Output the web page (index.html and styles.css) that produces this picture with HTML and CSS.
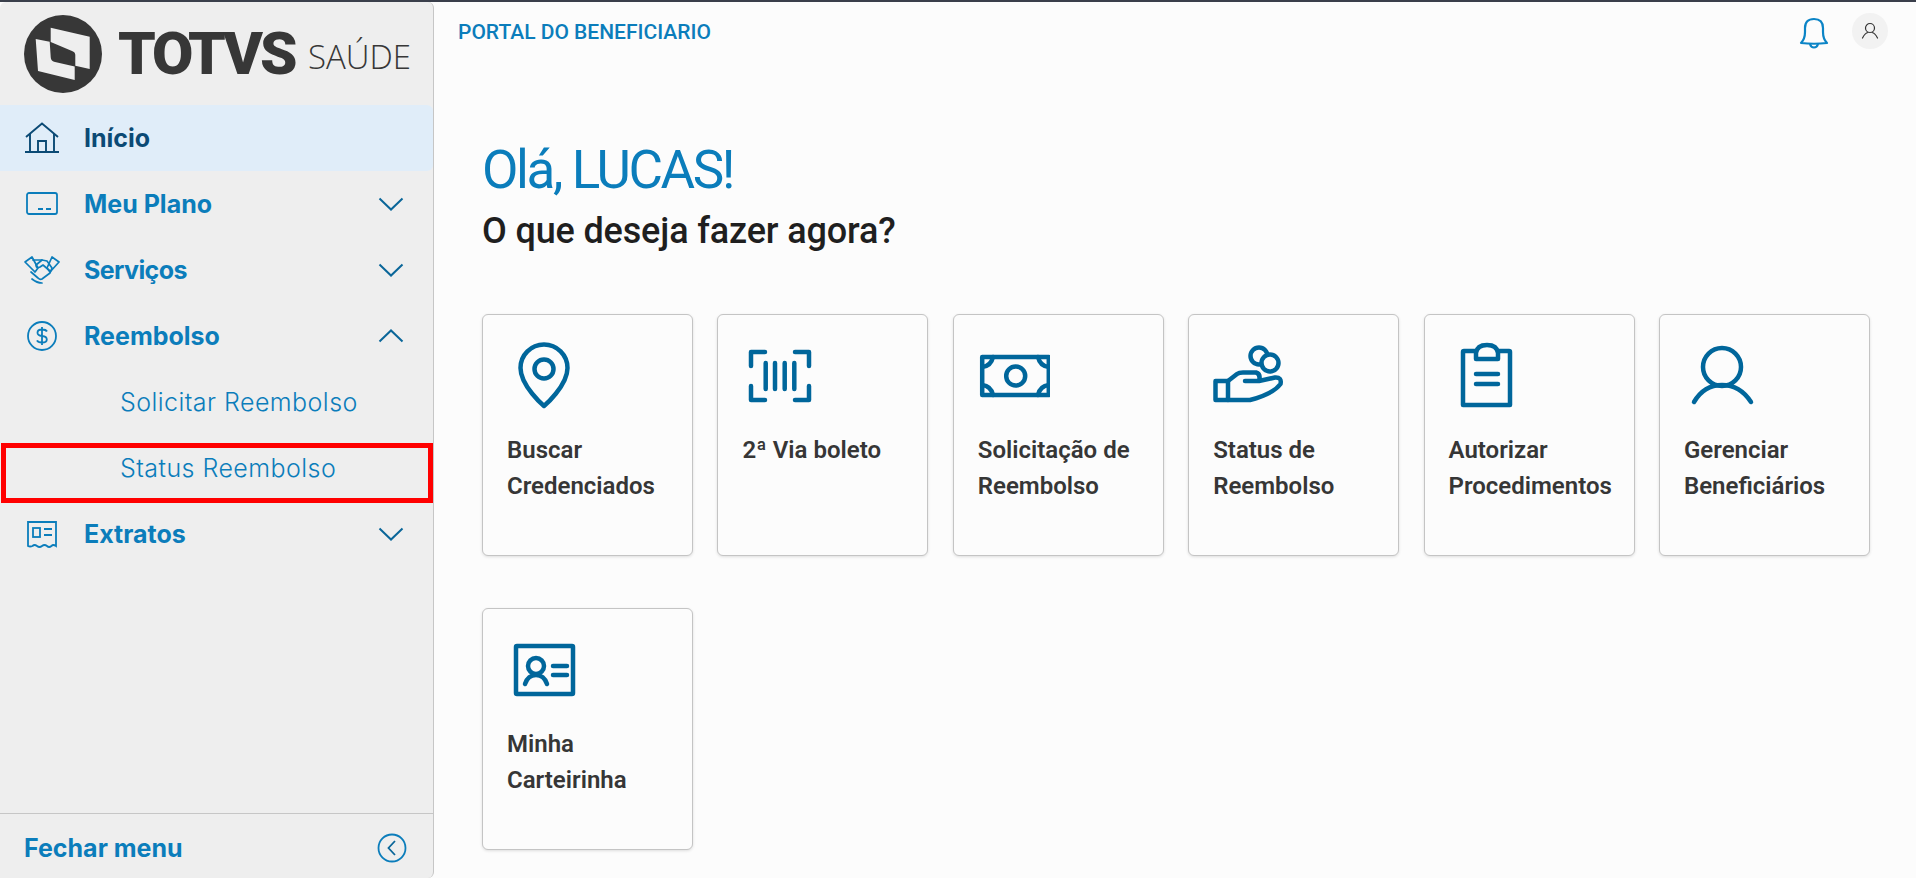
FILE: index.html
```html
<!DOCTYPE html>
<html lang="pt-BR">
  <head>
    <meta charset="UTF-8" />
    <title>Portal do Beneficiario</title>
    <link rel="stylesheet" href="styles.css">
  </head>
  <body>
    <aside class="sidebar">
      <div class="logo">
        <svg class="logo-mark" width="80" height="80" viewBox="0 0 80 80">
          <circle cx="40" cy="40" r="39" fill="#373737"/>
          <path d="M27.700 13.700 L66.700 22.700 L66.700 55 L52.300 51.700 L52.300 41 Q52.300 38 49 37 L27.700 28 Z" fill="#eee"/>
          <path d="M12.700 25 L26.700 27.700 L27.700 43 Q27.700 46.500 31 47.700 L51.700 52.500 L51.700 66 L15 57 Z" fill="#eee"/>
        </svg>
        <span class="logo-name">TOTVS</span>
        <span class="logo-sub">SAÚDE</span>
      </div>

      <nav class="menu">
        <a class="menu-item active">
          <svg class="menu-icon" width="36" height="32" viewBox="0 0 36 32" fill="none" stroke="currentColor" stroke-width="1.900">
            <path d="M2 15 L18 1.500 L34 15"/>
            <path d="M6 12 V29 M30 12 V29 M1 30 H35"/>
            <path d="M14 29 V19 H22 V29"/>
          </svg>
          <span>Início</span>
        </a>
        <a class="menu-item">
          <svg class="menu-icon" width="36" height="26" viewBox="0 0 36 26" fill="none" stroke="currentColor" stroke-width="1.800">
            <rect x="3" y="2" width="30" height="21" rx="2"/>
            <path d="M14 18 H19 M22 18 H27"/>
          </svg>
          <span>Meu Plano</span>
          <svg class="chevron" width="26" height="14" viewBox="0 0 26 14"><path d="M1.500 1.500 L13 12.500 L24.500 1.500"/></svg>
        </a>
        <a class="menu-item">
          <svg class="menu-icon" width="36" height="28" viewBox="0 0 36 28" fill="none" stroke="currentColor" stroke-width="1.700" stroke-linejoin="round" stroke-linecap="round">
            <path d="M1 6 L8 1 L14 12 L11 16 Z M35 6 L28 1 L23 12 L26 16 Z"/>
            <path d="M9 4 H14 L18 4 L23 5 L28 12 L26 17 L18 23 Q16 24 14 22 L7 16"/>
            <path d="M18 4 L12 9 Q12 13 16 11 L19 9 L26 15"/>
            <path d="M8 23 Q13 27 18 27"/>
          </svg>
          <span class="tight">Serviços</span>
          <svg class="chevron" width="26" height="14" viewBox="0 0 26 14"><path d="M1.500 1.500 L13 12.500 L24.500 1.500"/></svg>
        </a>
        <a class="menu-item">
          <svg class="menu-icon" width="36" height="32" viewBox="0 0 36 32" fill="none" stroke="currentColor" stroke-width="1.800">
            <circle cx="18" cy="16" r="14"/>
            <path d="M23 11.500 Q22 9.500 18 9.500 Q13.500 9.500 13.500 12.700 Q13.500 15.500 18 16 Q22.800 16.500 22.800 19.400 Q22.800 22.500 18 22.500 Q14 22.500 13 20.300 M18 7 V25"/>
          </svg>
          <span>Reembolso</span>
          <svg class="chevron" width="26" height="14" viewBox="0 0 26 14"><path d="M1.500 12.500 L13 1.500 L24.500 12.500"/></svg>
        </a>
        <a class="menu-sub">Solicitar Reembolso</a>
        <a class="menu-sub">Status Reembolso</a>
        <a class="menu-item">
          <svg class="menu-icon" width="36" height="28" viewBox="0 0 36 28" fill="none" stroke="currentColor" stroke-width="1.800">
            <path d="M4 26 V2 H32 V26 Q29 24 27.500 26 Q25 28 23 26 Q20.500 24 18 26 Q15.500 28 13 26 Q10.500 24 8.500 26 Q6 27 4 26 Z"/>
            <rect x="9" y="8" width="7" height="9"/>
            <path d="M20 9 H28 M20 15 H28"/>
          </svg>
          <span>Extratos</span>
          <svg class="chevron" width="26" height="14" viewBox="0 0 26 14"><path d="M1.500 1.500 L13 12.500 L24.500 1.500"/></svg>
        </a>
      </nav>

      <div class="sidebar-footer">
        <span>Fechar menu</span>
        <svg width="30" height="30" viewBox="0 0 30 30" fill="none" stroke="#0b7dbb" stroke-width="1.800">
          <circle cx="15" cy="15" r="13.500"/>
          <path d="M18 8 L11.500 15 L18 22" stroke="#0a6699"/>
        </svg>
      </div>

      <div class="highlight"></div>
    </aside>

    <main class="content">
      <header class="topbar">
        <span class="portal-title">PORTAL DO BENEFICIARIO</span>
        <svg class="bell" width="30" height="32" viewBox="0 0 30 32" fill="none" stroke="#0b84c6" stroke-width="2.200" stroke-linejoin="round">
          <path d="M2 26 Q6 22 6 15 V11 Q6 2 15 2 Q24 2 24 11 V15 Q24 22 28 26 Q15 27.500 2 26 Z"/>
          <path d="M11 27 Q12 30.500 15 30.500 Q18 30.500 19 27"/>
        </svg>
        <div class="avatar">
          <svg width="18" height="18" viewBox="0 0 18 18" fill="none" stroke="#333" stroke-width="1.200" stroke-linecap="round">
            <circle cx="9" cy="6" r="4.500"/>
            <path d="M1.500 16 Q4 11 7 10.500 M16.500 16 Q14 11 11 10.500"/>
          </svg>
        </div>
      </header>

      <section class="welcome">
        <h1>Olá, LUCAS!</h1>
        <h2>O que deseja fazer agora?</h2>
      </section>

      <section class="cards">
        <div class="card">
          <svg class="card-icon" viewBox="0 0 72 72">
            <path d="M37 66 C37 66 13.500 46 13.500 28 A23.500 23.500 0 0 1 60.500 28 C60.500 46 37 66 37 66 Z"/>
            <circle cx="37" cy="29" r="9.500"/>
          </svg>
          <p>Buscar Credenciados</p>
        </div>
        <div class="card">
          <svg class="card-icon" viewBox="0 0 72 72">
            <path d="M9 26 V12 H23 M53 12 H67 V26 M9 46 V60 H23 M53 60 H67 V46"/>
            <path d="M23.700 23 V49 M33 23 V49 M42.700 23 V49 M52.300 23 V49"/>
          </svg>
          <p>2ª Via boleto</p>
        </div>
        <div class="card">
          <svg class="card-icon" viewBox="0 0 72 72">
            <rect x="4.200" y="17" width="66.600" height="38"/>
            <path d="M4.200 27 Q13 26 15 17 M60 17 Q62 26 70.800 27 M4.200 45 Q13 46 15 55 M60 55 Q62 46 70.800 45"/>
            <circle cx="37.700" cy="36" r="9.500"/>
          </svg>
          <p>Solicitação de Reembolso</p>
        </div>
        <div class="card">
          <svg class="card-icon" viewBox="0 0 72 72">
            <circle cx="46" cy="16" r="8.500"/>
            <circle cx="57" cy="23" r="8.500" fill="#fcfcfc"/>
            <path d="M2.500 41 H15 V60 H2.500 Z"/>
            <path d="M15 41 L24 34 Q26 32.500 30 32.500 H43 Q48 34 46 41 H32 M46 41 L62 37.500 Q69 37 67.500 44 Q60 54 37 60 H15"/>
          </svg>
          <p>Status de Reembolso</p>
        </div>
        <div class="card">
          <svg class="card-icon" viewBox="0 0 72 72">
            <path d="M27 11 H15 Q14 11 14 12 V65 H61 V12 Q61 11 60 11 H49"/>
            <path d="M27 19 V13 Q28 5 38 5 Q48 5 49 13 V19 Z"/>
            <path d="M27 34 H49 M27 44 H49"/>
          </svg>
          <p>Autorizar Procedimentos</p>
        </div>
        <div class="card">
          <svg class="card-icon" viewBox="0 0 72 72">
            <circle cx="38" cy="27" r="19"/>
            <path d="M10 62 Q20 45 38 45 Q56 45 67 62"/>
          </svg>
          <p>Gerenciar Beneficiários</p>
        </div>
        <div class="card">
          <svg class="card-icon" viewBox="0 0 72 72">
            <rect x="9" y="12" width="57" height="48" rx="1"/>
            <circle cx="29" cy="32" r="8"/>
            <path d="M18 50 Q21 41 29 41 Q37 41 40 50"/>
            <path d="M46 32 H60 M46 41 H60"/>
          </svg>
          <p>Minha Carteirinha</p>
        </div>
      </section>
    </main>
  </body>
</html>
```

FILE: styles.css
```css
* {
  box-sizing: border-box;
}

body {
  margin: 0;
  height: 878px;
  overflow: hidden;
  display: flex;
  background-color: #fcfcfc;
  border-top: 2px solid #3a3f4b;
  font-family: Roboto, Arial, sans-serif;
}

/* sidebar */
.sidebar {
  position: relative;
  width: 434px;
  flex-shrink: 0;
  display: flex;
  flex-direction: column;
  background-color: #eee;
  border-right: 1px solid #c6c6c6;
  border-radius: 6px 6px 6px 0;
  font-family: Inter, "Liberation Sans", sans-serif;
}

.logo {
  height: 103px;
  display: flex;
  align-items: center;
  padding-left: 23px;
  color: #373737;
}

.logo-mark {
  flex-shrink: 0;
  margin-right: 15px;
}

.logo-name {
  width: 190px;
  font-family: Roboto, sans-serif;
  font-weight: 900;
  font-size: 60px;
  letter-spacing: -3px;
  line-height: 1;
}

.logo-sub {
  font-family: "Open Sans", sans-serif;
  font-weight: 300;
  font-size: 33px;
  margin-top: 6px;
  line-height: 1;
}

.menu {
  flex: 1;
}

.menu-item {
  height: 66px;
  display: flex;
  align-items: center;
  padding: 0 29px 0 24px;
  color: #0b7dbb;
  font-size: 25px;
  font-weight: 700;
}

.menu-item.active {
  background-color: #e0edf9;
  color: #0b4a75;
  border-radius: 0 6px 6px 0;
}

.menu-item .tight {
  letter-spacing: -0.600px;
}

.menu-icon {
  flex-shrink: 0;
  margin-right: 24px;
}

.chevron {
  margin-left: auto;
  fill: none;
  stroke: #0a6699;
  stroke-width: 2;
}

.menu-sub {
  height: 66px;
  display: flex;
  align-items: center;
  padding-left: 120px;
  color: #0b7dbb;
  font-size: 25px;
  font-weight: 300;
  letter-spacing: 0.450px;
}

.sidebar-footer {
  height: 65px;
  display: flex;
  align-items: center;
  justify-content: space-between;
  padding: 4px 26px 0 24px;
  border-top: 1px solid #c6c6c6;
  color: #0b7dbb;
  font-size: 25px;
  font-weight: 700;
}

.highlight {
  position: absolute;
  left: 1px;
  top: 441px;
  width: 432px;
  height: 60px;
  border: 5px solid #f00;
}

/* main area */
.content {
  flex: 1;
  padding-left: 48px;
}

.topbar {
  height: 60px;
  margin-left: -24px;
  padding-right: 28px;
  display: flex;
  align-items: flex-start;
}

.portal-title {
  margin-top: 18px;
  margin-right: auto;
  color: #0b7dbb;
  font-size: 21px;
  font-weight: 500;
}

.bell {
  margin-top: 15px;
}

.avatar {
  width: 36px;
  height: 36px;
  margin: 11px 0 0 23px;
  border-radius: 50%;
  background-color: #f2f2f2;
  display: flex;
  align-items: center;
  justify-content: center;
}

.welcome {
  padding-top: 79px;
}

.welcome h1 {
  margin: 0;
  color: #0b7dbb;
  font-size: 53px;
  font-weight: 400;
  letter-spacing: -2.400px;
  line-height: 58px;
}

.welcome h2 {
  margin: 14px 0 0;
  color: #1f1f1f;
  font-size: 36px;
  font-weight: 500;
  letter-spacing: -0.150px;
  line-height: 36px;
}

.cards {
  display: grid;
  grid-template-columns: repeat(6, 211px);
  column-gap: 24.400px;
  row-gap: 52px;
  margin-top: 65px;
}

.card {
  height: 242px;
  padding: 25px 20px 0 24px;
  background-color: #fcfcfc;
  border: 1px solid #c4c4c4;
  border-radius: 6px;
  box-shadow: 0 1px 3px rgba(0, 0, 0, 0.12);
}

.card-icon {
  display: block;
  width: 72px;
  height: 72px;
  fill: none;
  stroke: #00669b;
  stroke-width: 4.500;
  stroke-linecap: round;
  stroke-linejoin: round;
}

.card p {
  margin: 20px 0 0;
  color: #363636;
  font-size: 24px;
  font-weight: 600;
  line-height: 36px;
}
```
